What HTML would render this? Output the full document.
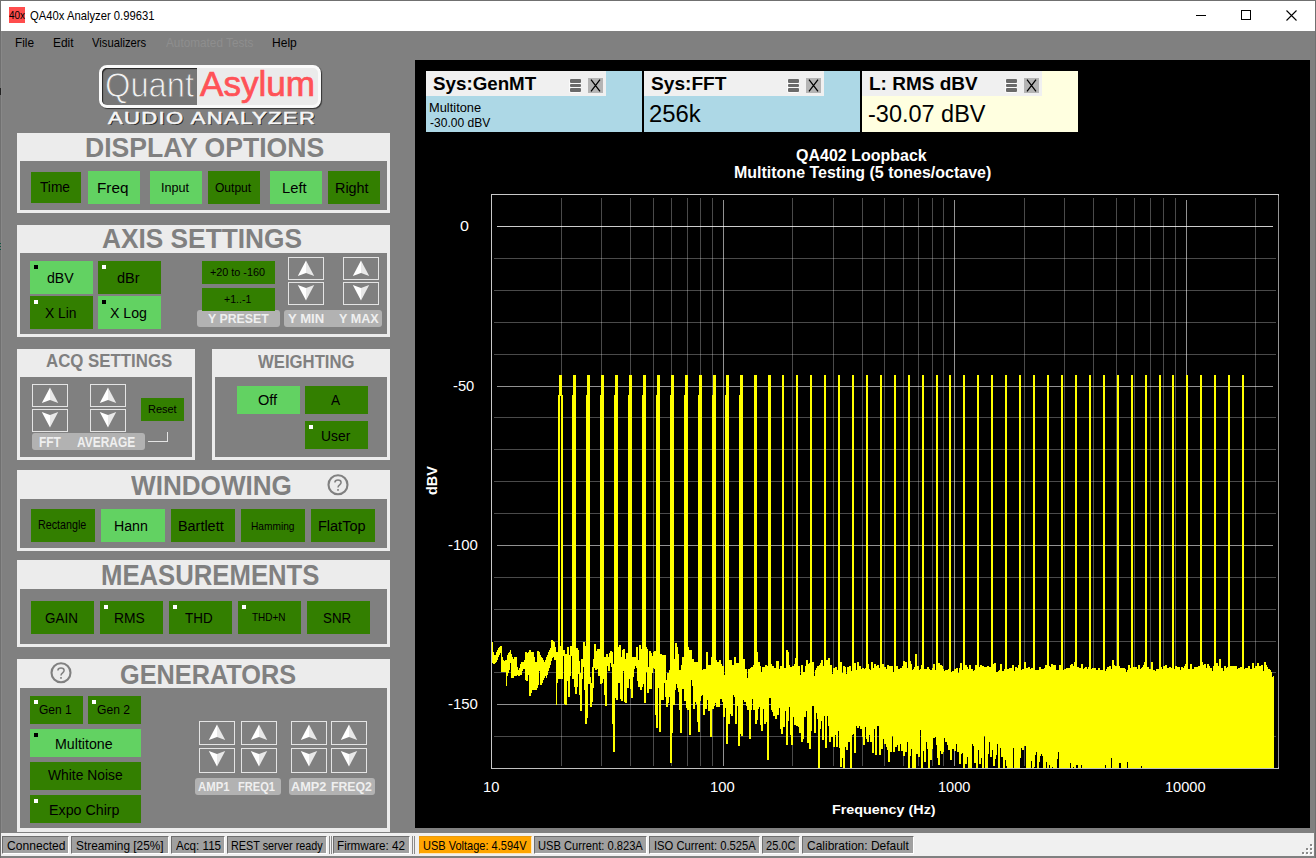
<!DOCTYPE html><html><head><meta charset="utf-8"><style>html,body{margin:0;padding:0;} body{width:1316px;height:858px;overflow:hidden;position:relative;background:#808080;font-family:"Liberation Sans", sans-serif;} body div{position:absolute;box-sizing:border-box;} svg{position:absolute;}</style></head><body><div style="left:0px;top:0px;width:1316px;height:858px;background:#707070;"></div><div style="left:1px;top:1px;width:1314px;height:857px;background:#808080;"></div><div style="left:1px;top:31px;width:1px;height:801px;background:#888888;"></div><div style="left:0px;top:88px;width:1px;height:7px;background:#222222;"></div><div style="left:0px;top:243px;width:1px;height:1px;background:#0f5540;"></div><div style="left:0px;top:246px;width:1px;height:1px;background:#0f5540;"></div><div style="left:0px;top:249px;width:1px;height:1px;background:#0f5540;"></div><div style="left:1px;top:1px;width:1314px;height:30px;background:#fff;"></div><div style="left:9px;top:7px;width:16px;height:16px;background:#ff4d4d;"></div><div style="left:9.00px;top:10.59px;font-size:10.29px;line-height:10.29px;color:#000;font-weight:normal;white-space:nowrap;transform:scaleX(0.9657);transform-origin:0 0;">40x</div><div style="left:29.89px;top:9.80px;font-size:12.75px;line-height:12.75px;color:#000;font-weight:normal;white-space:nowrap;transform:scaleX(0.8820);transform-origin:0 0;">QA40x Analyzer 0.99631</div><div style="left:1196px;top:15px;width:10px;height:1px;background:#000;"></div><div style="left:1241px;top:10px;width:10px;height:10px;border:1px solid #000;"></div><svg style="left:1286px;top:10px" width="11" height="11" viewBox="0 0 11 11"><path d="M0.5 0.5 L10.5 10.5 M10.5 0.5 L0.5 10.5" stroke="#000" stroke-width="1.1"/></svg><div style="left:15.45px;top:37.27px;font-size:12.32px;line-height:12.32px;color:#000;font-weight:normal;white-space:nowrap;transform:scaleX(0.9621);transform-origin:0 0;">File</div><div style="left:52.55px;top:37.27px;font-size:12.32px;line-height:12.32px;color:#000;font-weight:normal;white-space:nowrap;transform:scaleX(0.9682);transform-origin:0 0;">Edit</div><div style="left:92.14px;top:37.27px;font-size:12.32px;line-height:12.32px;color:#000;font-weight:normal;white-space:nowrap;transform:scaleX(0.9129);transform-origin:0 0;">Visualizers</div><div style="left:165.60px;top:37.27px;font-size:12.32px;line-height:12.32px;color:#8e8e8e;font-weight:normal;white-space:nowrap;transform:scaleX(0.9561);transform-origin:0 0;">Automated Tests</div><div style="left:271.64px;top:37.27px;font-size:12.32px;line-height:12.32px;color:#000;font-weight:normal;white-space:nowrap;transform:scaleX(0.9775);transform-origin:0 0;">Help</div><div style="left:99px;top:65px;width:222px;height:43px;border-radius:8px;background:#ebebeb;border:3px solid #fafafa;box-shadow:1px 1px 1px 0 #333;"></div><div style="left:102px;top:68px;width:95px;height:37px;border-radius:5px 0 0 5px;background:#777777;box-shadow:inset 1px 1px 1px #222;"></div><div style="left:105.23px;top:67.09px;font-size:35.22px;line-height:35.22px;color:#f2f2f2;font-weight:normal;white-space:nowrap;transform:scaleX(0.9284);transform-origin:0 0;-webkit-text-stroke:0.9px #777777;">Quant</div><div style="left:200.10px;top:67.12px;font-size:35.65px;line-height:35.65px;color:#ff5257;font-weight:normal;white-space:nowrap;transform:scaleX(0.9850);transform-origin:0 0;-webkit-text-stroke:0.7px #ff5257;">Asylum</div><div style="left:107.50px;top:109.74px;font-size:16.38px;line-height:16.38px;color:#f6f6f6;font-weight:normal;white-space:nowrap;transform:scaleX(1.3462);transform-origin:0 0;letter-spacing:1.0px;-webkit-text-stroke:0.55px #f6f6f6;text-shadow:1px 1px 0 #2a2a2a;">AUDIO ANALYZER</div><div style="left:17px;top:133px;width:373px;height:80px;background:#ececec;"></div><div style="left:20px;top:161px;width:367px;height:49px;background:#808080;"></div><div style="left:85.27px;top:133.50px;font-size:28.12px;line-height:28.12px;color:#808080;font-weight:bold;white-space:nowrap;transform:scaleX(0.9451);transform-origin:0 0;">DISPLAY OPTIONS</div><div style="left:31px;top:172px;width:50px;height:31px;background:#337f00;"></div><div style="left:40.33px;top:180.29px;font-size:14.78px;line-height:14.78px;color:#000;font-weight:normal;white-space:nowrap;transform:scaleX(0.9286);transform-origin:0 0;">Time</div><div style="left:88px;top:171px;width:52px;height:33px;background:#62d262;"></div><div style="left:97.18px;top:180.78px;font-size:14.20px;line-height:14.20px;color:#000;font-weight:normal;white-space:nowrap;transform:scaleX(1.0764);transform-origin:0 0;">Freq</div><div style="left:150px;top:171px;width:52px;height:33px;background:#62d262;"></div><div style="left:161.16px;top:181.88px;font-size:12.90px;line-height:12.90px;color:#000;font-weight:normal;white-space:nowrap;transform:scaleX(0.9778);transform-origin:0 0;">Input</div><div style="left:208px;top:171px;width:52px;height:33px;background:#337f00;"></div><div style="left:215.16px;top:181.88px;font-size:12.90px;line-height:12.90px;color:#000;font-weight:normal;white-space:nowrap;transform:scaleX(0.9330);transform-origin:0 0;">Output</div><div style="left:270px;top:171px;width:52px;height:33px;background:#62d262;"></div><div style="left:282.42px;top:180.78px;font-size:14.20px;line-height:14.20px;color:#000;font-weight:normal;white-space:nowrap;transform:scaleX(1.0383);transform-origin:0 0;">Left</div><div style="left:328px;top:171px;width:52px;height:33px;background:#337f00;"></div><div style="left:335.45px;top:180.78px;font-size:14.20px;line-height:14.20px;color:#000;font-weight:normal;white-space:nowrap;transform:scaleX(1.0130);transform-origin:0 0;">Right</div><div style="left:17px;top:225px;width:373px;height:112px;background:#ececec;"></div><div style="left:20px;top:253px;width:367px;height:81px;background:#808080;"></div><div style="left:101.74px;top:224.05px;font-size:28.41px;line-height:28.41px;color:#808080;font-weight:bold;white-space:nowrap;transform:scaleX(0.9246);transform-origin:0 0;">AXIS SETTINGS</div><div style="left:30px;top:261px;width:63px;height:33px;background:#62d262;"></div><div style="left:34px;top:265px;width:4px;height:4px;background:#000;"></div><div style="left:46.53px;top:270.78px;font-size:14.20px;line-height:14.20px;color:#000;font-weight:normal;white-space:nowrap;transform:scaleX(0.9960);transform-origin:0 0;">dBV</div><div style="left:98px;top:261px;width:63px;height:33px;background:#337f00;"></div><div style="left:102px;top:265px;width:4px;height:4px;background:#fff;"></div><div style="left:116.82px;top:270.78px;font-size:14.20px;line-height:14.20px;color:#000;font-weight:normal;white-space:nowrap;transform:scaleX(1.0233);transform-origin:0 0;">dBr</div><div style="left:30px;top:296px;width:63px;height:33px;background:#337f00;"></div><div style="left:34px;top:300px;width:4px;height:4px;background:#fff;"></div><div style="left:44.65px;top:305.80px;font-size:14.06px;line-height:14.06px;color:#000;font-weight:normal;white-space:nowrap;transform:scaleX(0.9842);transform-origin:0 0;">X Lin</div><div style="left:98px;top:296px;width:63px;height:33px;background:#62d262;"></div><div style="left:102px;top:300px;width:4px;height:4px;background:#000;"></div><div style="left:109.55px;top:305.80px;font-size:14.06px;line-height:14.06px;color:#000;font-weight:normal;white-space:nowrap;transform:scaleX(1.0077);transform-origin:0 0;">X Log</div><div style="left:197px;top:310px;width:83px;height:17px;background:#b2b2b2;border-radius:3px;"></div><div style="left:284px;top:310px;width:98px;height:17px;background:#b2b2b2;border-radius:3px;"></div><div style="left:202px;top:261px;width:73px;height:23px;background:#337f00;"></div><div style="left:209.76px;top:267.21px;font-size:11.45px;line-height:11.45px;color:#000;font-weight:normal;white-space:nowrap;transform:scaleX(0.9450);transform-origin:0 0;">+20 to -160</div><div style="left:202px;top:288px;width:73px;height:23px;background:#337f00;"></div><div style="left:223.77px;top:294.33px;font-size:11.30px;line-height:11.30px;color:#000;font-weight:normal;white-space:nowrap;transform:scaleX(0.9344);transform-origin:0 0;">+1..-1</div><div style="left:207.65px;top:311.57px;font-size:13.62px;line-height:13.62px;color:#efefef;font-weight:bold;white-space:nowrap;transform:scaleX(0.9057);transform-origin:0 0;">Y PRESET</div><div style="left:288.14px;top:311.61px;font-size:13.33px;line-height:13.33px;color:#efefef;font-weight:bold;white-space:nowrap;transform:scaleX(0.9841);transform-origin:0 0;">Y MIN</div><div style="left:338.75px;top:311.61px;font-size:13.33px;line-height:13.33px;color:#efefef;font-weight:bold;white-space:nowrap;transform:scaleX(0.9438);transform-origin:0 0;">Y MAX</div><div style="left:288px;top:257px;width:36px;height:23px;border:1px solid #e4e4e4;"></div><svg style="left:288px;top:257px" width="36" height="23" viewBox="0 0 36 23"><path d="M18 3.5 L9.8 19 L18 16 Z" fill="#fff"/><path d="M18 3.5 L26.2 19 L18 16 Z" fill="#e8e8e8"/></svg><div style="left:288px;top:282px;width:36px;height:23px;border:1px solid #e4e4e4;"></div><svg style="left:288px;top:282px" width="36" height="23" viewBox="0 0 36 23"><path d="M18 18.5 L9.8 3 L18 6 Z" fill="#fff"/><path d="M18 18.5 L26.2 3 L18 6 Z" fill="#e8e8e8"/></svg><div style="left:343px;top:257px;width:36px;height:23px;border:1px solid #e4e4e4;"></div><svg style="left:343px;top:257px" width="36" height="23" viewBox="0 0 36 23"><path d="M18 3.5 L9.8 19 L18 16 Z" fill="#fff"/><path d="M18 3.5 L26.2 19 L18 16 Z" fill="#e8e8e8"/></svg><div style="left:343px;top:282px;width:36px;height:23px;border:1px solid #e4e4e4;"></div><svg style="left:343px;top:282px" width="36" height="23" viewBox="0 0 36 23"><path d="M18 18.5 L9.8 3 L18 6 Z" fill="#fff"/><path d="M18 18.5 L26.2 3 L18 6 Z" fill="#e8e8e8"/></svg><div style="left:17px;top:349px;width:178px;height:111px;background:#ececec;"></div><div style="left:20px;top:377px;width:172px;height:80px;background:#808080;"></div><div style="left:45.98px;top:353.09px;font-size:17.97px;line-height:17.97px;color:#808080;font-weight:bold;white-space:nowrap;transform:scaleX(0.9371);transform-origin:0 0;">ACQ SETTINGS</div><div style="left:32px;top:384px;width:36px;height:23px;border:1px solid #e4e4e4;"></div><svg style="left:32px;top:384px" width="36" height="23" viewBox="0 0 36 23"><path d="M18 3.5 L9.8 19 L18 16 Z" fill="#fff"/><path d="M18 3.5 L26.2 19 L18 16 Z" fill="#e8e8e8"/></svg><div style="left:32px;top:409px;width:36px;height:23px;border:1px solid #e4e4e4;"></div><svg style="left:32px;top:409px" width="36" height="23" viewBox="0 0 36 23"><path d="M18 18.5 L9.8 3 L18 6 Z" fill="#fff"/><path d="M18 18.5 L26.2 3 L18 6 Z" fill="#e8e8e8"/></svg><div style="left:90px;top:384px;width:36px;height:23px;border:1px solid #e4e4e4;"></div><svg style="left:90px;top:384px" width="36" height="23" viewBox="0 0 36 23"><path d="M18 3.5 L9.8 19 L18 16 Z" fill="#fff"/><path d="M18 3.5 L26.2 19 L18 16 Z" fill="#e8e8e8"/></svg><div style="left:90px;top:409px;width:36px;height:23px;border:1px solid #e4e4e4;"></div><svg style="left:90px;top:409px" width="36" height="23" viewBox="0 0 36 23"><path d="M18 18.5 L9.8 3 L18 6 Z" fill="#fff"/><path d="M18 18.5 L26.2 3 L18 6 Z" fill="#e8e8e8"/></svg><div style="left:141px;top:398px;width:43px;height:23px;background:#337f00;"></div><div style="left:147.52px;top:404.45px;font-size:11.16px;line-height:11.16px;color:#000;font-weight:normal;white-space:nowrap;transform:scaleX(0.9831);transform-origin:0 0;">Reset</div><div style="left:32px;top:433px;width:113px;height:17px;background:#b2b2b2;border-radius:3px;"></div><div style="left:38.82px;top:435.00px;font-size:14.06px;line-height:14.06px;color:#efefef;font-weight:bold;white-space:nowrap;transform:scaleX(0.8512);transform-origin:0 0;">FFT</div><div style="left:77.30px;top:435.00px;font-size:14.06px;line-height:14.06px;color:#efefef;font-weight:bold;white-space:nowrap;transform:scaleX(0.8518);transform-origin:0 0;">AVERAGE</div><div style="left:148px;top:441px;width:20px;height:1px;background:#e4e4e4;"></div><div style="left:167px;top:432px;width:1px;height:10px;background:#e4e4e4;"></div><div style="left:212px;top:349px;width:178px;height:111px;background:#ececec;"></div><div style="left:215px;top:377px;width:172px;height:80px;background:#808080;"></div><div style="left:258.20px;top:352.97px;font-size:18.70px;line-height:18.70px;color:#808080;font-weight:bold;white-space:nowrap;transform:scaleX(0.8947);transform-origin:0 0;">WEIGHTING</div><div style="left:237px;top:386px;width:63px;height:28px;background:#62d262;"></div><div style="left:257.94px;top:393.41px;font-size:14.64px;line-height:14.64px;color:#000;font-weight:normal;white-space:nowrap;transform:scaleX(0.9966);transform-origin:0 0;">Off</div><div style="left:305px;top:386px;width:63px;height:28px;background:#337f00;"></div><div style="left:330.90px;top:393.41px;font-size:14.64px;line-height:14.64px;color:#000;font-weight:normal;white-space:nowrap;transform:scaleX(0.9349);transform-origin:0 0;">A</div><div style="left:305px;top:421px;width:63px;height:28px;background:#337f00;"></div><div style="left:309px;top:425px;width:4px;height:4px;background:#fff;"></div><div style="left:320.86px;top:428.51px;font-size:14.64px;line-height:14.64px;color:#000;font-weight:normal;white-space:nowrap;transform:scaleX(0.9470);transform-origin:0 0;">User</div><div style="left:17px;top:470px;width:373px;height:81px;background:#ececec;"></div><div style="left:20px;top:499px;width:367px;height:49px;background:#808080;"></div><div style="left:130.60px;top:471.28px;font-size:28.26px;line-height:28.26px;color:#808080;font-weight:bold;white-space:nowrap;transform:scaleX(0.9239);transform-origin:0 0;">WINDOWING</div><svg style="left:325.5px;top:472.5px" width="24" height="24" viewBox="0 0 24 24"><circle cx="12" cy="11.7" r="9.5" fill="none" stroke="#808080" stroke-width="2.1"/><path d="M8.9 9.6 C8.9 6.2 15.1 6.2 15.1 9.6 C15.1 11.8 12 11.9 12 14.4" fill="none" stroke="#808080" stroke-width="1.5"/><rect x="11.2" y="16" width="1.6" height="1.8" fill="#808080"/></svg><div style="left:31px;top:509px;width:64px;height:33px;background:#337f00;"></div><div style="left:37.84px;top:520.14px;font-size:11.88px;line-height:11.88px;color:#000;font-weight:normal;white-space:nowrap;transform:scaleX(0.9040);transform-origin:0 0;">Rectangle</div><div style="left:101px;top:509px;width:64px;height:33px;background:#62d262;"></div><div style="left:114.37px;top:518.63px;font-size:14.49px;line-height:14.49px;color:#000;font-weight:normal;white-space:nowrap;transform:scaleX(0.9774);transform-origin:0 0;">Hann</div><div style="left:171px;top:509px;width:64px;height:33px;background:#337f00;"></div><div style="left:178.35px;top:518.63px;font-size:14.49px;line-height:14.49px;color:#000;font-weight:normal;white-space:nowrap;transform:scaleX(0.9947);transform-origin:0 0;">Bartlett</div><div style="left:241px;top:509px;width:64px;height:33px;background:#337f00;"></div><div style="left:250.89px;top:520.60px;font-size:10.87px;line-height:10.87px;color:#000;font-weight:normal;white-space:nowrap;transform:scaleX(0.9345);transform-origin:0 0;">Hamming</div><div style="left:311px;top:509px;width:64px;height:33px;background:#337f00;"></div><div style="left:317.54px;top:518.63px;font-size:14.49px;line-height:14.49px;color:#000;font-weight:normal;white-space:nowrap;transform:scaleX(1.0001);transform-origin:0 0;">FlatTop</div><div style="left:17px;top:560px;width:373px;height:87px;background:#ececec;"></div><div style="left:20px;top:589px;width:367px;height:55px;background:#808080;"></div><div style="left:101.43px;top:559.72px;font-size:29.28px;line-height:29.28px;color:#808080;font-weight:bold;white-space:nowrap;transform:scaleX(0.8780);transform-origin:0 0;">MEASUREMENTS</div><div style="left:31px;top:601px;width:63px;height:33px;background:#337f00;"></div><div style="left:44.83px;top:610.63px;font-size:14.49px;line-height:14.49px;color:#000;font-weight:normal;white-space:nowrap;transform:scaleX(0.9270);transform-origin:0 0;">GAIN</div><div style="left:100px;top:601px;width:63px;height:33px;background:#337f00;"></div><div style="left:104px;top:605px;width:4px;height:4px;background:#fff;"></div><div style="left:114.39px;top:610.63px;font-size:14.49px;line-height:14.49px;color:#000;font-weight:normal;white-space:nowrap;transform:scaleX(0.9551);transform-origin:0 0;">RMS</div><div style="left:169px;top:601px;width:63px;height:33px;background:#337f00;"></div><div style="left:173px;top:605px;width:4px;height:4px;background:#fff;"></div><div style="left:185.33px;top:610.63px;font-size:14.49px;line-height:14.49px;color:#000;font-weight:normal;white-space:nowrap;transform:scaleX(0.9258);transform-origin:0 0;">THD</div><div style="left:238px;top:601px;width:63px;height:33px;background:#337f00;"></div><div style="left:242px;top:605px;width:4px;height:4px;background:#fff;"></div><div style="left:251.80px;top:612.23px;font-size:11.30px;line-height:11.30px;color:#000;font-weight:normal;white-space:nowrap;transform:scaleX(0.8819);transform-origin:0 0;">THD+N</div><div style="left:307px;top:601px;width:63px;height:33px;background:#337f00;"></div><div style="left:323.20px;top:610.63px;font-size:14.49px;line-height:14.49px;color:#000;font-weight:normal;white-space:nowrap;transform:scaleX(0.9189);transform-origin:0 0;">SNR</div><div style="left:17px;top:659px;width:373px;height:173px;background:#ececec;"></div><div style="left:20px;top:688px;width:367px;height:140px;background:#808080;"></div><svg style="left:49.3px;top:661px" width="24" height="24" viewBox="0 0 24 24"><circle cx="12" cy="11.7" r="9.5" fill="none" stroke="#808080" stroke-width="2.1"/><path d="M8.9 9.6 C8.9 6.2 15.1 6.2 15.1 9.6 C15.1 11.8 12 11.9 12 14.4" fill="none" stroke="#808080" stroke-width="1.5"/><rect x="11.2" y="16" width="1.6" height="1.8" fill="#808080"/></svg><div style="left:119.99px;top:660.60px;font-size:28.12px;line-height:28.12px;color:#808080;font-weight:bold;white-space:nowrap;transform:scaleX(0.8999);transform-origin:0 0;">GENERATORS</div><div style="left:30px;top:696px;width:53px;height:28px;background:#337f00;"></div><div style="left:34px;top:700px;width:4px;height:4px;background:#fff;"></div><div style="left:39.15px;top:704.25px;font-size:12.46px;line-height:12.46px;color:#000;font-weight:normal;white-space:nowrap;transform:scaleX(0.9625);transform-origin:0 0;">Gen 1</div><div style="left:88px;top:696px;width:53px;height:28px;background:#337f00;"></div><div style="left:92px;top:700px;width:4px;height:4px;background:#fff;"></div><div style="left:96.99px;top:704.25px;font-size:12.46px;line-height:12.46px;color:#000;font-weight:normal;white-space:nowrap;transform:scaleX(0.9720);transform-origin:0 0;">Gen 2</div><div style="left:30px;top:729px;width:111px;height:28px;background:#62d262;"></div><div style="left:34px;top:733px;width:4px;height:4px;background:#000;"></div><div style="left:55.36px;top:736.80px;font-size:14.06px;line-height:14.06px;color:#000;font-weight:normal;white-space:nowrap;transform:scaleX(1.0118);transform-origin:0 0;">Multitone</div><div style="left:30px;top:762px;width:111px;height:28px;background:#337f00;"></div><div style="left:47.53px;top:767.58px;font-size:14.20px;line-height:14.20px;color:#000;font-weight:normal;white-space:nowrap;transform:scaleX(0.9757);transform-origin:0 0;">White Noise</div><div style="left:30px;top:795px;width:111px;height:28px;background:#337f00;"></div><div style="left:34px;top:799px;width:4px;height:4px;background:#fff;"></div><div style="left:49.06px;top:802.90px;font-size:14.06px;line-height:14.06px;color:#000;font-weight:normal;white-space:nowrap;transform:scaleX(1.0143);transform-origin:0 0;">Expo Chirp</div><div style="left:199px;top:721px;width:36px;height:24px;border:1px solid #e4e4e4;"></div><svg style="left:199px;top:721px" width="36" height="23" viewBox="0 0 36 23"><path d="M18 3.5 L9.8 19 L18 16 Z" fill="#fff"/><path d="M18 3.5 L26.2 19 L18 16 Z" fill="#e8e8e8"/></svg><div style="left:199px;top:748px;width:36px;height:25px;border:1px solid #e4e4e4;"></div><svg style="left:199px;top:748px" width="36" height="23" viewBox="0 0 36 23"><path d="M18 18.5 L9.8 3 L18 6 Z" fill="#fff"/><path d="M18 18.5 L26.2 3 L18 6 Z" fill="#e8e8e8"/></svg><div style="left:241px;top:721px;width:36px;height:24px;border:1px solid #e4e4e4;"></div><svg style="left:241px;top:721px" width="36" height="23" viewBox="0 0 36 23"><path d="M18 3.5 L9.8 19 L18 16 Z" fill="#fff"/><path d="M18 3.5 L26.2 19 L18 16 Z" fill="#e8e8e8"/></svg><div style="left:241px;top:748px;width:36px;height:25px;border:1px solid #e4e4e4;"></div><svg style="left:241px;top:748px" width="36" height="23" viewBox="0 0 36 23"><path d="M18 18.5 L9.8 3 L18 6 Z" fill="#fff"/><path d="M18 18.5 L26.2 3 L18 6 Z" fill="#e8e8e8"/></svg><div style="left:291px;top:721px;width:36px;height:24px;border:1px solid #e4e4e4;"></div><svg style="left:291px;top:721px" width="36" height="23" viewBox="0 0 36 23"><path d="M18 3.5 L9.8 19 L18 16 Z" fill="#fff"/><path d="M18 3.5 L26.2 19 L18 16 Z" fill="#e8e8e8"/></svg><div style="left:291px;top:748px;width:36px;height:25px;border:1px solid #e4e4e4;"></div><svg style="left:291px;top:748px" width="36" height="23" viewBox="0 0 36 23"><path d="M18 18.5 L9.8 3 L18 6 Z" fill="#fff"/><path d="M18 18.5 L26.2 3 L18 6 Z" fill="#e8e8e8"/></svg><div style="left:331px;top:721px;width:36px;height:24px;border:1px solid #e4e4e4;"></div><svg style="left:331px;top:721px" width="36" height="23" viewBox="0 0 36 23"><path d="M18 3.5 L9.8 19 L18 16 Z" fill="#fff"/><path d="M18 3.5 L26.2 19 L18 16 Z" fill="#e8e8e8"/></svg><div style="left:331px;top:748px;width:36px;height:25px;border:1px solid #e4e4e4;"></div><svg style="left:331px;top:748px" width="36" height="23" viewBox="0 0 36 23"><path d="M18 18.5 L9.8 3 L18 6 Z" fill="#fff"/><path d="M18 18.5 L26.2 3 L18 6 Z" fill="#e8e8e8"/></svg><div style="left:195px;top:778px;width:86px;height:17px;background:#b2b2b2;border-radius:3px;"></div><div style="left:289px;top:778px;width:86px;height:17px;background:#b2b2b2;border-radius:3px;"></div><div style="left:198.42px;top:780.07px;font-size:13.62px;line-height:13.62px;color:#efefef;font-weight:bold;white-space:nowrap;transform:scaleX(0.8351);transform-origin:0 0;">AMP1</div><div style="left:237.68px;top:780.07px;font-size:13.62px;line-height:13.62px;color:#efefef;font-weight:bold;white-space:nowrap;transform:scaleX(0.8166);transform-origin:0 0;">FREQ1</div><div style="left:291.48px;top:780.07px;font-size:13.62px;line-height:13.62px;color:#efefef;font-weight:bold;white-space:nowrap;transform:scaleX(0.9372);transform-origin:0 0;">AMP2</div><div style="left:331.40px;top:780.07px;font-size:13.62px;line-height:13.62px;color:#efefef;font-weight:bold;white-space:nowrap;transform:scaleX(0.9022);transform-origin:0 0;">FREQ2</div><div style="left:1px;top:833px;width:1313px;height:23px;background:#f0f0f0;"></div><div style="left:2px;top:836px;width:67px;height:18px;background:#a0a0a0;border-top:1px solid #6e6e6e;border-left:1px solid #6e6e6e;border-bottom:1px solid #fff;border-right:1px solid #fff;"></div><div style="left:6.70px;top:839.88px;font-size:12.90px;line-height:12.90px;color:#000;font-weight:normal;white-space:nowrap;transform:scaleX(0.9379);transform-origin:0 0;">Connected</div><div style="left:71px;top:836px;width:98px;height:18px;background:#a0a0a0;border-top:1px solid #6e6e6e;border-left:1px solid #6e6e6e;border-bottom:1px solid #fff;border-right:1px solid #fff;"></div><div style="left:76.47px;top:839.88px;font-size:12.90px;line-height:12.90px;color:#000;font-weight:normal;white-space:nowrap;transform:scaleX(0.9186);transform-origin:0 0;">Streaming [25%]</div><div style="left:171px;top:836px;width:54px;height:18px;background:#a0a0a0;border-top:1px solid #6e6e6e;border-left:1px solid #6e6e6e;border-bottom:1px solid #fff;border-right:1px solid #fff;"></div><div style="left:176.00px;top:839.88px;font-size:12.90px;line-height:12.90px;color:#000;font-weight:normal;white-space:nowrap;transform:scaleX(0.9028);transform-origin:0 0;">Acq: 115</div><div style="left:227px;top:836px;width:100px;height:18px;background:#a0a0a0;border-top:1px solid #6e6e6e;border-left:1px solid #6e6e6e;border-bottom:1px solid #fff;border-right:1px solid #fff;"></div><div style="left:231.43px;top:839.88px;font-size:12.90px;line-height:12.90px;color:#000;font-weight:normal;white-space:nowrap;transform:scaleX(0.8385);transform-origin:0 0;">REST server ready</div><div style="left:333px;top:836px;width:77px;height:18px;background:#a0a0a0;border-top:1px solid #6e6e6e;border-left:1px solid #6e6e6e;border-bottom:1px solid #fff;border-right:1px solid #fff;"></div><div style="left:337.27px;top:839.88px;font-size:12.90px;line-height:12.90px;color:#000;font-weight:normal;white-space:nowrap;transform:scaleX(0.9051);transform-origin:0 0;">Firmware: 42</div><div style="left:419px;top:836px;width:113px;height:18px;background:#ffa500;border-top:1px solid #e89a10;border-left:1px solid #e89a10;border-bottom:1px solid #ffe6b8;border-right:1px solid #ffe6b8;"></div><div style="left:423.47px;top:839.88px;font-size:12.90px;line-height:12.90px;color:#000;font-weight:normal;white-space:nowrap;transform:scaleX(0.8548);transform-origin:0 0;">USB Voltage: 4.594V</div><div style="left:534px;top:836px;width:113px;height:18px;background:#a0a0a0;border-top:1px solid #6e6e6e;border-left:1px solid #6e6e6e;border-bottom:1px solid #fff;border-right:1px solid #fff;"></div><div style="left:537.66px;top:839.88px;font-size:12.90px;line-height:12.90px;color:#000;font-weight:normal;white-space:nowrap;transform:scaleX(0.8656);transform-origin:0 0;">USB Current: 0.823A</div><div style="left:649px;top:836px;width:111px;height:18px;background:#a0a0a0;border-top:1px solid #6e6e6e;border-left:1px solid #6e6e6e;border-bottom:1px solid #fff;border-right:1px solid #fff;"></div><div style="left:653.59px;top:839.88px;font-size:12.90px;line-height:12.90px;color:#000;font-weight:normal;white-space:nowrap;transform:scaleX(0.8721);transform-origin:0 0;">ISO Current: 0.525A</div><div style="left:762px;top:836px;width:38px;height:18px;background:#a0a0a0;border-top:1px solid #6e6e6e;border-left:1px solid #6e6e6e;border-bottom:1px solid #fff;border-right:1px solid #fff;"></div><div style="left:765.95px;top:839.88px;font-size:12.90px;line-height:12.90px;color:#000;font-weight:normal;white-space:nowrap;transform:scaleX(0.8564);transform-origin:0 0;">25.0C</div><div style="left:802px;top:836px;width:112px;height:18px;background:#a0a0a0;border-top:1px solid #6e6e6e;border-left:1px solid #6e6e6e;border-bottom:1px solid #fff;border-right:1px solid #fff;"></div><div style="left:806.60px;top:839.88px;font-size:12.90px;line-height:12.90px;color:#000;font-weight:normal;white-space:nowrap;transform:scaleX(0.9291);transform-origin:0 0;">Calibration: Default</div><div style="left:1311px;top:845px;width:2px;height:2px;background:#ffffff;"></div><div style="left:1310px;top:844px;width:2px;height:2px;background:#8a8a8a;"></div><div style="left:1307px;top:849px;width:2px;height:2px;background:#ffffff;"></div><div style="left:1306px;top:848px;width:2px;height:2px;background:#8a8a8a;"></div><div style="left:1311px;top:849px;width:2px;height:2px;background:#ffffff;"></div><div style="left:1310px;top:848px;width:2px;height:2px;background:#8a8a8a;"></div><div style="left:1303px;top:853px;width:2px;height:2px;background:#ffffff;"></div><div style="left:1302px;top:852px;width:2px;height:2px;background:#8a8a8a;"></div><div style="left:1307px;top:853px;width:2px;height:2px;background:#ffffff;"></div><div style="left:1306px;top:852px;width:2px;height:2px;background:#8a8a8a;"></div><div style="left:1311px;top:853px;width:2px;height:2px;background:#ffffff;"></div><div style="left:1310px;top:852px;width:2px;height:2px;background:#8a8a8a;"></div><div style="left:329px;top:836px;width:1px;height:18px;background:#8a8a8a;"></div><div style="left:331px;top:836px;width:1px;height:18px;background:#8a8a8a;"></div><div style="left:412px;top:836px;width:1px;height:18px;background:#8a8a8a;"></div><div style="left:414px;top:836px;width:1px;height:18px;background:#8a8a8a;"></div><div style="left:415px;top:60px;width:895px;height:768px;background:#000;"></div><div style="left:426px;top:71px;width:216px;height:61px;background:#add8e6;"></div><div style="left:426px;top:71px;width:180px;height:25px;background:#f0f0f0;"></div><div style="left:433.19px;top:73.81px;font-size:19.13px;line-height:19.13px;color:#000;font-weight:bold;white-space:nowrap;transform:scaleX(0.9818);transform-origin:0 0;">Sys:GenMT</div><div style="left:569px;top:78.5px;width:12px;height:14px;background:#fbfbfb;border-radius:2px;"></div><div style="left:569.5px;top:79.2px;width:11px;height:3.7px;background:#6a6a6a;border-radius:1px;"></div><div style="left:569.5px;top:83.60000000000001px;width:11px;height:3.7px;background:#6a6a6a;border-radius:1px;"></div><div style="left:569.5px;top:88.0px;width:11px;height:3.7px;background:#6a6a6a;border-radius:1px;"></div><div style="left:588px;top:78px;width:15px;height:15px;background:#b4b4b4;"></div><svg style="left:590px;top:79px" width="11" height="13" viewBox="0 0 11 13"><path d="M1 0.6 L10 12.4 M10 0.6 L1 12.4" stroke="#000" stroke-width="1.25"/></svg><div style="left:429.37px;top:102.03px;font-size:12.61px;line-height:12.61px;color:#000;font-weight:normal;white-space:nowrap;transform:scaleX(1.0191);transform-origin:0 0;">Multitone</div><div style="left:429.56px;top:117.15px;font-size:12.46px;line-height:12.46px;color:#000;font-weight:normal;white-space:nowrap;transform:scaleX(0.9677);transform-origin:0 0;">-30.00 dBV</div><div style="left:644px;top:71px;width:216px;height:61px;background:#add8e6;"></div><div style="left:644px;top:71px;width:180px;height:25px;background:#f0f0f0;"></div><div style="left:651.18px;top:73.81px;font-size:19.13px;line-height:19.13px;color:#000;font-weight:bold;white-space:nowrap;transform:scaleX(1.0006);transform-origin:0 0;">Sys:FFT</div><div style="left:787px;top:78.5px;width:12px;height:14px;background:#fbfbfb;border-radius:2px;"></div><div style="left:787.5px;top:79.2px;width:11px;height:3.7px;background:#6a6a6a;border-radius:1px;"></div><div style="left:787.5px;top:83.60000000000001px;width:11px;height:3.7px;background:#6a6a6a;border-radius:1px;"></div><div style="left:787.5px;top:88.0px;width:11px;height:3.7px;background:#6a6a6a;border-radius:1px;"></div><div style="left:806px;top:78px;width:15px;height:15px;background:#b4b4b4;"></div><svg style="left:808px;top:79px" width="11" height="13" viewBox="0 0 11 13"><path d="M1 0.6 L10 12.4 M10 0.6 L1 12.4" stroke="#000" stroke-width="1.25"/></svg><div style="left:649.21px;top:102.31px;font-size:24.20px;line-height:24.20px;color:#000;font-weight:normal;white-space:nowrap;transform:scaleX(0.9862);transform-origin:0 0;">256k</div><div style="left:862px;top:71px;width:216px;height:61px;background:#ffffe0;"></div><div style="left:862px;top:71px;width:180px;height:25px;background:#f0f0f0;"></div><div style="left:868.76px;top:73.81px;font-size:19.13px;line-height:19.13px;color:#000;font-weight:bold;white-space:nowrap;transform:scaleX(0.9936);transform-origin:0 0;">L: RMS dBV</div><div style="left:1005px;top:78.5px;width:12px;height:14px;background:#fbfbfb;border-radius:2px;"></div><div style="left:1005.5px;top:79.2px;width:11px;height:3.7px;background:#6a6a6a;border-radius:1px;"></div><div style="left:1005.5px;top:83.60000000000001px;width:11px;height:3.7px;background:#6a6a6a;border-radius:1px;"></div><div style="left:1005.5px;top:88.0px;width:11px;height:3.7px;background:#6a6a6a;border-radius:1px;"></div><div style="left:1024px;top:78px;width:15px;height:15px;background:#b4b4b4;"></div><svg style="left:1026px;top:79px" width="11" height="13" viewBox="0 0 11 13"><path d="M1 0.6 L10 12.4 M10 0.6 L1 12.4" stroke="#000" stroke-width="1.25"/></svg><div style="left:867.54px;top:102.43px;font-size:24.06px;line-height:24.06px;color:#000;font-weight:normal;white-space:nowrap;transform:scaleX(0.9766);transform-origin:0 0;">-30.07 dBV</div><div style="left:795.96px;top:146.88px;font-size:16.09px;line-height:16.09px;color:#fff;font-weight:bold;white-space:nowrap;transform:scaleX(0.9955);transform-origin:0 0;">QA402 Loopback</div><div style="left:733.86px;top:164.85px;font-size:16.96px;line-height:16.96px;color:#fff;font-weight:bold;white-space:nowrap;transform:scaleX(0.9437);transform-origin:0 0;">Multitone Testing (5 tones/octave)</div><div style="left:831.87px;top:803.09px;font-size:13.48px;line-height:13.48px;color:#fff;font-weight:bold;white-space:nowrap;transform:scaleX(1.0654);transform-origin:0 0;">Frequency (Hz)</div><div style="left:459.86px;top:218.65px;font-size:14.35px;line-height:14.35px;color:#fff;font-weight:normal;white-space:nowrap;transform:scaleX(1.1181);transform-origin:0 0;">0</div><div style="left:452.64px;top:378.63px;font-size:14.49px;line-height:14.49px;color:#fff;font-weight:normal;white-space:nowrap;transform:scaleX(1.0160);transform-origin:0 0;">-50</div><div style="left:448.43px;top:537.53px;font-size:14.49px;line-height:14.49px;color:#fff;font-weight:normal;white-space:nowrap;transform:scaleX(1.0314);transform-origin:0 0;">-100</div><div style="left:448.43px;top:696.63px;font-size:14.49px;line-height:14.49px;color:#fff;font-weight:normal;white-space:nowrap;transform:scaleX(1.0314);transform-origin:0 0;">-150</div><div style="left:482.90px;top:779.63px;font-size:14.49px;line-height:14.49px;color:#fff;font-weight:normal;white-space:nowrap;transform:scaleX(1.0143);transform-origin:0 0;">10</div><div style="left:710.09px;top:779.51px;font-size:14.64px;line-height:14.64px;color:#fff;font-weight:normal;white-space:nowrap;transform:scaleX(1.0105);transform-origin:0 0;">100</div><div style="left:937.81px;top:779.51px;font-size:14.64px;line-height:14.64px;color:#fff;font-weight:normal;white-space:nowrap;transform:scaleX(0.9949);transform-origin:0 0;">1000</div><div style="left:1165.10px;top:779.51px;font-size:14.64px;line-height:14.64px;color:#fff;font-weight:normal;white-space:nowrap;transform:scaleX(0.9979);transform-origin:0 0;">10000</div><div style="left:418px;top:473.5px;width:28px;height:14px;font-size:14.5px;line-height:14px;color:#fff;font-weight:bold;transform:rotate(-90deg);transform-origin:50% 50%;text-align:center;">dBV</div><svg style="left:0;top:0" width="1316" height="858" viewBox="0 0 1316 858" shape-rendering="crispEdges"><line x1="561.5" y1="198" x2="561.5" y2="766" stroke="rgba(255,255,255,0.29)"/><line x1="601.5" y1="198" x2="601.5" y2="766" stroke="rgba(255,255,255,0.29)"/><line x1="630.5" y1="198" x2="630.5" y2="766" stroke="rgba(255,255,255,0.29)"/><line x1="653.5" y1="198" x2="653.5" y2="766" stroke="rgba(255,255,255,0.29)"/><line x1="671.5" y1="198" x2="671.5" y2="766" stroke="rgba(255,255,255,0.29)"/><line x1="687.5" y1="198" x2="687.5" y2="766" stroke="rgba(255,255,255,0.29)"/><line x1="700.5" y1="198" x2="700.5" y2="766" stroke="rgba(255,255,255,0.29)"/><line x1="712.5" y1="198" x2="712.5" y2="766" stroke="rgba(255,255,255,0.29)"/><line x1="723.5" y1="200" x2="723.5" y2="766" stroke="rgba(255,255,255,0.57)"/><line x1="792.5" y1="198" x2="792.5" y2="766" stroke="rgba(255,255,255,0.29)"/><line x1="833.5" y1="198" x2="833.5" y2="766" stroke="rgba(255,255,255,0.29)"/><line x1="862.5" y1="198" x2="862.5" y2="766" stroke="rgba(255,255,255,0.29)"/><line x1="884.5" y1="198" x2="884.5" y2="766" stroke="rgba(255,255,255,0.29)"/><line x1="903.5" y1="198" x2="903.5" y2="766" stroke="rgba(255,255,255,0.29)"/><line x1="918.5" y1="198" x2="918.5" y2="766" stroke="rgba(255,255,255,0.29)"/><line x1="932.5" y1="198" x2="932.5" y2="766" stroke="rgba(255,255,255,0.29)"/><line x1="943.5" y1="198" x2="943.5" y2="766" stroke="rgba(255,255,255,0.29)"/><line x1="954.5" y1="200" x2="954.5" y2="766" stroke="rgba(255,255,255,0.57)"/><line x1="1024.5" y1="198" x2="1024.5" y2="766" stroke="rgba(255,255,255,0.29)"/><line x1="1064.5" y1="198" x2="1064.5" y2="766" stroke="rgba(255,255,255,0.29)"/><line x1="1093.5" y1="198" x2="1093.5" y2="766" stroke="rgba(255,255,255,0.29)"/><line x1="1116.5" y1="198" x2="1116.5" y2="766" stroke="rgba(255,255,255,0.29)"/><line x1="1134.5" y1="198" x2="1134.5" y2="766" stroke="rgba(255,255,255,0.29)"/><line x1="1150.5" y1="198" x2="1150.5" y2="766" stroke="rgba(255,255,255,0.29)"/><line x1="1163.5" y1="198" x2="1163.5" y2="766" stroke="rgba(255,255,255,0.29)"/><line x1="1175.5" y1="198" x2="1175.5" y2="766" stroke="rgba(255,255,255,0.29)"/><line x1="1186.5" y1="200" x2="1186.5" y2="766" stroke="rgba(255,255,255,0.57)"/><line x1="1255.5" y1="198" x2="1255.5" y2="766" stroke="rgba(255,255,255,0.29)"/><line x1="497" y1="226.5" x2="1273" y2="226.5" stroke="rgba(255,255,255,0.8)"/><line x1="494" y1="258.5" x2="1276" y2="258.5" stroke="rgba(255,255,255,0.29)"/><line x1="494" y1="290.5" x2="1276" y2="290.5" stroke="rgba(255,255,255,0.29)"/><line x1="494" y1="322.5" x2="1276" y2="322.5" stroke="rgba(255,255,255,0.29)"/><line x1="494" y1="354.5" x2="1276" y2="354.5" stroke="rgba(255,255,255,0.29)"/><line x1="497" y1="386.5" x2="1273" y2="386.5" stroke="rgba(255,255,255,0.57)"/><line x1="494" y1="417.5" x2="1276" y2="417.5" stroke="rgba(255,255,255,0.29)"/><line x1="494" y1="449.5" x2="1276" y2="449.5" stroke="rgba(255,255,255,0.29)"/><line x1="494" y1="481.5" x2="1276" y2="481.5" stroke="rgba(255,255,255,0.29)"/><line x1="494" y1="513.5" x2="1276" y2="513.5" stroke="rgba(255,255,255,0.29)"/><line x1="497" y1="545.5" x2="1273" y2="545.5" stroke="rgba(255,255,255,0.57)"/><line x1="494" y1="577.5" x2="1276" y2="577.5" stroke="rgba(255,255,255,0.29)"/><line x1="494" y1="609.5" x2="1276" y2="609.5" stroke="rgba(255,255,255,0.29)"/><line x1="494" y1="641.5" x2="1276" y2="641.5" stroke="rgba(255,255,255,0.29)"/><line x1="494" y1="672.5" x2="1276" y2="672.5" stroke="rgba(255,255,255,0.29)"/><line x1="497" y1="704.5" x2="1273" y2="704.5" stroke="rgba(255,255,255,0.57)"/><line x1="494" y1="736.5" x2="1276" y2="736.5" stroke="rgba(255,255,255,0.29)"/><path d="M491.5 768.5V194.5H1278.5" fill="none" stroke="#c8c8c8"/><path d="M1278.5 194.5V768.5H491.5" fill="none" stroke="#c0c0c0"/><path d="M1278.5 196V767" fill="none" stroke="#959595"/><path d="M492.5 642V663M493.5 652V664M494.5 655V664M495.5 655V663M496.5 652V662M497.5 650V660M498.5 648V657M499.5 647V655M500.5 646V653M501.5 646V672M502.5 657V672M503.5 660V672M504.5 661V672M505.5 660V672M506.5 660V686M507.5 655V676M508.5 653V673M509.5 652V670M510.5 650V663M511.5 654V678M512.5 657V678M513.5 659V678M514.5 657V676M515.5 657V676M516.5 657V676M517.5 667V675M518.5 670V676M519.5 668V676M520.5 664V675M521.5 662V675M522.5 662V671M523.5 662V669M524.5 660V669M525.5 652V680M526.5 652V681M527.5 653V681M528.5 652V675M529.5 650V696M530.5 650V696M531.5 652V693M532.5 652V690M533.5 652V690M534.5 657V690M535.5 662V690M536.5 662V690M537.5 651V688M538.5 651V685M539.5 652V671M540.5 655V685M541.5 657V685M542.5 658V683M543.5 660V680M544.5 662V678M545.5 660V676M546.5 657V678M547.5 655V675M548.5 652V671M549.5 650V668M550.5 648V665M551.5 640V661M552.5 640V658M553.5 641V657M554.5 642V660M555.5 647V660M556.5 652V705M557.5 652V683M558.5 643.0V664.9M559.5 647.8V674.2M560.5 650.8V674.2M561.5 650.8V664.1M562.5 651.4V656.2M563.5 650.1V656.2M564.5 650.1V703.9M565.5 654.0V705.1M566.5 653.6V705.1M567.5 647.1V681.1M568.5 647.1V696.6M569.5 655.2V696.6M570.5 646.2V675.5M571.5 646.0V656.2M572.5 646.0V661.7M573.5 651.6V661.7M574.5 650.4V686.6M575.5 650.4V694.1M576.5 648.0V694.1M577.5 648.0V687.4M578.5 650.0V674.1M579.5 661.4V694.7M580.5 673.1V710.7M581.5 659.3V710.7M582.5 658.8V678.9M583.5 642.3V667.3M584.5 642.3V690.1M585.5 645.5V724.1M586.5 674.1V724.1M587.5 667.7V717.5M588.5 666.9V684.0M589.5 666.9V684.2M590.5 676.5V707.1M591.5 683.2V707.1M592.5 667.3V701.6M593.5 659.2V687.5M594.5 643.6V668.3M595.5 643.6V670.1M596.5 650.6V670.1M597.5 648.5V668.9M598.5 648.5V676.4M599.5 649.0V676.4M600.5 649.0V684.3M601.5 644.9V684.3M602.5 641.7V683.4M603.5 641.7V671.0M604.5 656.6V694.5M605.5 656.6V705.9M606.5 654.4V705.9M607.5 654.4V665.9M608.5 657.0V671.2M609.5 652.5V671.2M610.5 650.5V662.9M611.5 650.5V667.1M612.5 651.5V724.3M613.5 664.0V751.8M614.5 664.8V751.8M615.5 664.2V697.8M616.5 651.8V700.1M617.5 651.8V700.1M618.5 647.0V683.4M619.5 645.4V682.5M620.5 645.4V698.6M621.5 656.9V701.1M622.5 650.2V701.1M623.5 649.4V670.9M624.5 649.4V701.6M625.5 659.1V702.7M626.5 653.0V702.7M627.5 653.0V687.9M628.5 643.3V687.9M629.5 643.3V678.9M630.5 647.2V688.8M631.5 669.9V697.9M632.5 656.6V697.9M633.5 656.6V677.3M634.5 657.3V668.7M635.5 656.6V666.3M636.5 646.6V668.2M637.5 646.6V681.3M638.5 659.7V687.4M639.5 644.9V687.4M640.5 644.9V689.6M641.5 649.1V689.6M642.5 649.1V686.6M643.5 649.9V683.6M644.5 662.1V703.3M645.5 646.5V703.3M646.5 646.5V671.7M647.5 649.0V693.4M648.5 666.6V693.4M649.5 651.2V689.1M650.5 651.2V689.4M651.5 652.7V689.4M652.5 655.6V673.1M653.5 651.9V667.9M654.5 651.4V669.2M655.5 651.4V715.4M656.5 662.3V728.0M657.5 665.6V728.0M658.5 666.4V687.5M659.5 657.7V732.4M660.5 654.4V732.4M661.5 654.4V700.1M662.5 654.5V700.3M663.5 654.5V700.3M664.5 655.2V682.8M665.5 655.2V696.5M666.5 679.8V706.9M667.5 673.4V706.9M668.5 673.4V703.2M669.5 670.3V696.5M670.5 668.1V763.2M671.5 655.8V763.2M672.5 651.2V732.9M673.5 651.2V704.7M674.5 658.5V704.7M675.5 643.0V689.5M676.5 643.0V683.7M677.5 647.3V688.2M678.5 653.6V692.0M679.5 669.6V710.4M680.5 669.6V733.4M681.5 665.1V733.4M682.5 657.0V689.0M683.5 656.9V689.0M684.5 656.9V700.7M685.5 656.8V700.7M686.5 656.8V707.8M687.5 646.8V710.3M688.5 646.8V710.3M689.5 649.6V734.5M690.5 649.5V734.5M691.5 649.5V680.3M692.5 658.8V686.4M693.5 658.8V709.3M694.5 661.8V709.3M695.5 661.8V701.5M696.5 662.1V704.1M697.5 662.1V722.1M698.5 665.5V732.0M699.5 655.4V732.0M700.5 655.4V700.5M701.5 658.8V696.0M702.5 670.3V695.4M703.5 668.7V714.7M704.5 668.7V714.7M705.5 668.5V709.3M706.5 652.1V709.3M707.5 652.1V699.9M708.5 664.7V711.2M709.5 665.4V711.2M710.5 665.4V736.5M711.5 657.3V736.5M712.5 657.3V708.5M713.5 662.9V708.5M714.5 666.3V706.4M715.5 660.1V703.2M716.5 660.1V706.7M717.5 661.6V706.7M718.5 661.6V707.3M719.5 660.1V707.3M720.5 660.1V699.3M721.5 664.4V699.3M722.5 665.6V701.6M723.5 665.6V716.6M724.5 675.3V716.6M725.5 670.1V707.5M726.5 670.1V743.5M727.5 673.8V743.5M728.5 660.3V724.0M729.5 660.3V724.0M730.5 660.0V713.8M731.5 660.0V716.1M732.5 665.4V716.1M733.5 665.4V694.6M734.5 657.0V696.7M735.5 657.0V724.3M736.5 662.8V724.3M737.5 662.8V706.3M738.5 663.3V746.4M739.5 663.6V746.4M740.5 669.7V734.2M741.5 662.9V735.6M742.5 662.9V735.6M743.5 658.6V700.2M744.5 658.6V702.2M745.5 669.0V702.2M746.5 669.0V705.7M747.5 678.0V710.2M748.5 668.6V710.2M749.5 668.6V738.5M750.5 668.1V738.5M751.5 667.3V710.4M752.5 667.1V698.7M753.5 664.6V710.2M754.5 664.6V710.2M755.5 665.8V724.1M756.5 652.3V724.1M757.5 652.3V719.5M758.5 661.9V709.3M759.5 661.9V706.7M760.5 665.5V724.5M761.5 671.5V730.8M762.5 667.4V730.8M763.5 666.8V709.0M764.5 666.8V723.7M765.5 664.5V723.7M766.5 664.5V722.2M767.5 666.2V760.3M768.5 663.5V760.3M769.5 663.5V697.5M770.5 663.9V697.8M771.5 663.9V710.3M772.5 666.2V711.9M773.5 666.2V716.3M774.5 668.4V716.3M775.5 668.0V719.2M776.5 661.4V719.2M777.5 661.0V714.5M778.5 661.0V714.5M779.5 669.4V708.0M780.5 666.4V728.5M781.5 666.4V734.0M782.5 657.0V734.0M783.5 657.0V726.5M784.5 668.3V726.5M785.5 668.3V711.3M786.5 649.8V744.7M787.5 649.8V744.7M788.5 652.2V721.4M789.5 665.4V707.3M790.5 667.2V735.0M791.5 667.2V745.4M792.5 666.3V745.4M793.5 666.3V717.4M794.5 663.8V725.3M795.5 658.2V725.3M796.5 658.2V726.3M797.5 665.5V726.3M798.5 665.8V726.9M799.5 665.8V733.0M800.5 674.7V733.0M801.5 664.5V741.8M802.5 664.5V741.8M803.5 672.3V738.6M804.5 672.3V716.6M805.5 665.7V716.6M806.5 660.3V711.1M807.5 660.3V742.9M808.5 663.8V742.9M809.5 662.8V749.3M810.5 662.8V749.3M811.5 663.0V731.4M812.5 661.7V706.2M813.5 661.7V706.2M814.5 675.7V732.5M815.5 669.8V732.5M816.5 667.7V713.4M817.5 665.9V718.9M818.5 665.9V768.0M819.5 664.9V768.0M820.5 663.1V729.1M821.5 659.9V720.8M822.5 659.9V740.0M823.5 665.6V740.0M824.5 665.6V716.3M825.5 671.8V747.8M826.5 659.8V747.8M827.5 659.8V716.4M828.5 657.5V726.3M829.5 657.5V742.0M830.5 665.3V742.0M831.5 665.3V736.5M832.5 674.4V736.5M833.5 667.6V747.4M834.5 667.6V747.4M835.5 666.8V734.6M836.5 666.8V747.1M837.5 669.8V747.1M838.5 666.6V731.1M839.5 666.6V748.0M840.5 661.9V766.9M841.5 661.9V766.9M842.5 673.3V757.8M843.5 666.3V768.0M844.5 666.3V768.0M845.5 667.3V747.3M846.5 674.4V750.3M847.5 666.8V750.3M848.5 666.8V742.1M849.5 666.1V742.1M850.5 666.1V768.0M851.5 670.8V768.0M852.5 670.8V734.6M853.5 663.1V734.3M854.5 662.6V753.4M855.5 662.6V753.4M856.5 670.2V726.4M857.5 662.3V727.8M858.5 662.3V727.8M859.5 665.8V725.8M860.5 665.8V729.1M861.5 669.1V729.1M862.5 667.5V736.5M863.5 667.5V745.3M864.5 668.8V745.3M865.5 668.0V727.1M866.5 663.2V739.0M867.5 663.2V741.8M868.5 663.7V741.8M869.5 668.8V734.6M870.5 670.0V742.3M871.5 662.1V742.3M872.5 662.1V753.0M873.5 667.7V753.0M874.5 663.6V728.6M875.5 663.6V754.6M876.5 666.2V754.6M877.5 664.5V725.8M878.5 664.5V725.8M879.5 667.5V755.2M880.5 662.8V755.2M881.5 662.8V748.5M882.5 663.8V748.5M883.5 663.8V739.2M884.5 666.7V743.7M885.5 666.7V743.7M886.5 668.5V746.7M887.5 665.4V750.3M888.5 665.4V762.2M889.5 665.5V762.2M890.5 665.5V752.2M891.5 666.1V752.2M892.5 666.1V735.9M893.5 671.8V751.8M894.5 668.5V751.8M895.5 668.5V746.5M896.5 665.6V746.5M897.5 665.6V745.2M898.5 669.2V751.3M899.5 668.7V751.3M900.5 667.8V743.9M901.5 667.8V750.5M902.5 666.0V750.5M903.5 660.9V756.0M904.5 660.9V756.0M905.5 661.5V752.4M906.5 661.5V752.4M907.5 668.4V742.2M908.5 663.3V768.0M909.5 661.4V768.0M910.5 661.4V755.7M911.5 663.6V748.8M912.5 669.8V768.0M913.5 669.1V768.0M914.5 667.1V768.0M915.5 653.9V768.0M916.5 653.9V754.4M917.5 666.3V754.4M918.5 666.3V756.8M919.5 669.6V756.8M920.5 668.6V729.9M921.5 665.4V768.0M922.5 665.4V768.0M923.5 672.3V751.0M924.5 668.7V762.0M925.5 668.7V762.0M926.5 669.2V742.3M927.5 666.6V748.5M928.5 666.6V768.0M929.5 668.6V768.0M930.5 669.9V760.4M931.5 669.9V760.4M932.5 668.1V749.3M933.5 664.2V737.5M934.5 664.2V737.5M935.5 669.8V737.4M936.5 669.8V745.3M937.5 674.7V757.7M938.5 663.3V765.3M939.5 663.3V765.3M940.5 664.6V751.3M941.5 664.6V753.6M942.5 665.5V753.6M943.5 668.9V752.2M944.5 671.3V738.1M945.5 670.1V741.5M946.5 670.1V741.5M947.5 669.6V744.9M948.5 669.1V750.4M949.5 669.1V750.4M950.5 670.7V759.6M951.5 672.0V759.6M952.5 671.0V749.2M953.5 671.0V749.2M954.5 669.0V750.7M955.5 669.0V750.7M956.5 668.2V743.5M957.5 668.2V751.8M958.5 672.8V751.8M959.5 668.0V764.2M960.5 663.4V764.2M961.5 663.4V753.8M962.5 669.6V753.0M963.5 663.5V768.0M964.5 663.5V768.0M965.5 665.2V764.2M966.5 665.2V764.2M967.5 667.0V757.2M968.5 668.7V768.0M969.5 664.9V768.0M970.5 664.9V768.0M971.5 669.4V768.0M972.5 669.4V743.8M973.5 670.7V746.1M974.5 669.8V763.0M975.5 665.1V763.0M976.5 665.1V768.0M977.5 657.2V768.0M978.5 657.2V749.6M979.5 667.2V763.8M980.5 664.8V763.8M981.5 664.8V757.6M982.5 666.0V768.0M983.5 666.0V768.0M984.5 667.4V735.6M985.5 667.4V768.0M986.5 667.4V768.0M987.5 665.8V768.0M988.5 665.8V754.3M989.5 666.9V741.7M990.5 666.9V757.4M991.5 670.5V757.4M992.5 664.2V749.6M993.5 664.2V765.8M994.5 663.3V765.8M995.5 663.3V759.2M996.5 672.3V754.7M997.5 672.1V743.8M998.5 670.8V768.0M999.5 669.5V768.0M1000.5 664.0V747.6M1001.5 664.0V756.9M1002.5 670.5V756.9M1003.5 670.5V768.0M1004.5 668.8V768.0M1005.5 668.8V760.2M1006.5 670.7V766.2M1007.5 668.8V768.0M1008.5 668.8V768.0M1009.5 667.5V768.0M1010.5 667.5V768.0M1011.5 668.1V768.0M1012.5 665.1V768.0M1013.5 665.1V748.3M1014.5 671.2V768.0M1015.5 667.0V768.0M1016.5 667.0V768.0M1017.5 668.4V768.0M1018.5 664.8V768.0M1019.5 664.8V767.9M1020.5 668.6V758.3M1021.5 669.5V748.3M1022.5 668.8V750.1M1023.5 668.8V750.1M1024.5 662.4V745.5M1025.5 662.4V745.5M1026.5 667.5V768.0M1027.5 668.3V768.0M1028.5 667.4V768.0M1029.5 667.4V768.0M1030.5 668.7V768.0M1031.5 667.5V760.5M1032.5 667.5V768.0M1033.5 667.2V768.0M1034.5 667.2V766.5M1035.5 669.9V755.1M1036.5 669.9V751.5M1037.5 670.3V768.0M1038.5 670.3V768.0M1039.5 666.7V762.1M1040.5 666.7V756.4M1041.5 669.3V753.9M1042.5 669.0V755.5M1043.5 669.0V768.0M1044.5 667.6V768.0M1045.5 665.2V768.0M1046.5 665.2V761.8M1047.5 668.3V768.0M1048.5 666.1V768.0M1049.5 666.1V765.4M1050.5 667.0V768.0M1051.5 663.9V768.0M1052.5 663.9V766.5M1053.5 665.1V768.0M1054.5 665.0V768.0M1055.5 665.0V768.0M1056.5 669.7V768.0M1057.5 670.0V758.5M1058.5 670.0V752.0M1059.5 665.3V768.0M1060.5 665.3V768.0M1061.5 669.0V768.0M1062.5 669.2V768.0M1063.5 670.1V768.0M1064.5 669.4V768.0M1065.5 668.8V768.0M1066.5 667.9V768.0M1067.5 667.9V768.0M1068.5 667.8V768.0M1069.5 667.8V768.0M1070.5 664.7V763.0M1071.5 663.8V768.0M1072.5 663.8V768.0M1073.5 665.7V767.1M1074.5 661.5V768.0M1075.5 661.5V768.0M1076.5 668.4V765.3M1077.5 666.7V765.2M1078.5 666.7V768.0M1079.5 668.4V768.0M1080.5 668.4V768.0M1081.5 663.6V764.8M1082.5 663.6V768.0M1083.5 669.3V768.0M1084.5 668.1V768.0M1085.5 667.3V768.0M1086.5 667.3V768.0M1087.5 668.9V768.0M1088.5 666.7V768.0M1089.5 666.7V768.0M1090.5 669.3V768.0M1091.5 669.3V768.0M1092.5 668.1V768.0M1093.5 668.1V768.0M1094.5 668.3V768.0M1095.5 668.3V768.0M1096.5 670.3V768.0M1097.5 670.2V768.0M1098.5 668.1V768.0M1099.5 668.1V768.0M1100.5 669.5V768.0M1101.5 669.8V768.0M1102.5 669.7V768.0M1103.5 669.7V768.0M1104.5 671.2V768.0M1105.5 671.2V765.1M1106.5 669.4V768.0M1107.5 667.3V768.0M1108.5 667.3V768.0M1109.5 666.3V768.0M1110.5 666.3V768.0M1111.5 668.9V757.7M1112.5 660.2V768.0M1113.5 660.2V768.0M1114.5 665.4V768.0M1115.5 665.6V768.0M1116.5 665.6V768.0M1117.5 665.2V768.0M1118.5 665.2V768.0M1119.5 665.5V762.8M1120.5 667.5V762.8M1121.5 667.6V768.0M1122.5 667.6V768.0M1123.5 667.5V768.0M1124.5 667.5V768.0M1125.5 668.7V768.0M1126.5 671.9V768.0M1127.5 669.6V761.5M1128.5 665.2V768.0M1129.5 665.2V768.0M1130.5 667.7V768.0M1131.5 668.1V768.0M1132.5 666.8V768.0M1133.5 666.8V768.0M1134.5 666.6V768.0M1135.5 666.6V768.0M1136.5 666.9V768.0M1137.5 668.5V768.0M1138.5 665.1V768.0M1139.5 665.1V768.0M1140.5 668.9V768.0M1141.5 667.6V765.5M1142.5 666.6V768.0M1143.5 665.3V768.0M1144.5 661.9V768.0M1145.5 661.9V768.0M1146.5 669.0V768.0M1147.5 667.4V768.0M1148.5 667.4V768.0M1149.5 669.3V768.0M1150.5 669.3V768.0M1151.5 662.4V768.0M1152.5 662.4V768.0M1153.5 669.6V768.0M1154.5 669.6V768.0M1155.5 671.0V768.0M1156.5 668.7V768.0M1157.5 668.7V768.0M1158.5 668.7V768.0M1159.5 667.3V768.0M1160.5 667.0V768.0M1161.5 667.0V768.0M1162.5 669.4V768.0M1163.5 666.2V768.0M1164.5 666.2V768.0M1165.5 665.4V768.0M1166.5 665.4V768.0M1167.5 667.9V768.0M1168.5 667.6V768.0M1169.5 666.9V768.0M1170.5 666.9V768.0M1171.5 667.6V768.0M1172.5 662.4V768.0M1173.5 662.4V768.0M1174.5 668.9V768.0M1175.5 666.2V768.0M1176.5 666.2V768.0M1177.5 667.2V768.0M1178.5 667.2V768.0M1179.5 667.2V768.0M1180.5 670.1V768.0M1181.5 666.6V768.0M1182.5 666.6V768.0M1183.5 668.3V768.0M1184.5 666.4V768.0M1185.5 663.5V768.0M1186.5 662.7V768.0M1187.5 662.7V768.0M1188.5 668.7V768.0M1189.5 669.3V768.0M1190.5 664.2V768.0M1191.5 664.2V768.0M1192.5 669.4V768.0M1193.5 669.4V768.0M1194.5 666.6V768.0M1195.5 666.6V768.0M1196.5 666.7V768.0M1197.5 666.7V768.0M1198.5 665.6V768.0M1199.5 665.6V768.0M1200.5 668.0V768.0M1201.5 661.9V768.0M1202.5 661.9V768.0M1203.5 665.2V768.0M1204.5 664.4V768.0M1205.5 664.4V768.0M1206.5 667.6V768.0M1207.5 663.6V768.0M1208.5 663.6V768.0M1209.5 665.9V768.0M1210.5 668.0V768.0M1211.5 668.1V768.0M1212.5 670.6V768.0M1213.5 666.2V768.0M1214.5 664.9V768.0M1215.5 664.9V768.0M1216.5 663.3V768.0M1217.5 663.3V768.0M1218.5 666.0V768.0M1219.5 659.1V768.0M1220.5 659.1V768.0M1221.5 667.9V768.0M1222.5 667.9V768.0M1223.5 670.8V768.0M1224.5 665.7V768.0M1225.5 665.7V768.0M1226.5 667.7V768.0M1227.5 666.5V768.0M1228.5 666.5V768.0M1229.5 669.2V768.0M1230.5 665.6V768.0M1231.5 665.6V768.0M1232.5 666.2V768.0M1233.5 666.2V768.0M1234.5 666.2V768.0M1235.5 666.4V768.0M1236.5 666.4V768.0M1237.5 669.2V768.0M1238.5 668.3V768.0M1239.5 668.3V768.0M1240.5 667.3V768.0M1241.5 667.3V768.0M1242.5 667.9V768.0M1243.5 667.9V768.0M1244.5 669.3V768.0M1245.5 667.9V768.0M1246.5 667.9V768.0M1247.5 668.0V768.0M1248.5 665.6V768.0M1249.5 665.6V768.0M1250.5 668.6V768.0M1251.5 668.6V768.0M1252.5 662.9V768.0M1253.5 662.9V768.0M1254.5 667.5V768.0M1255.5 666.2V768.0M1256.5 666.2V768.0M1257.5 663.1V768.0M1258.5 663.1V768.0M1259.5 665.8V768.0M1260.5 665.8V768.0M1261.5 665.2V768.0M1262.5 665.2V768.0M1263.5 671.0V768.0M1264.5 662.3V768.0M1265.5 662.3V768.0M1266.5 665.4V768.0M1267.5 667.4V768.0M1268.5 668.5V768.0M1269.5 668.9V768.0M1270.5 670.1V768.0M1271.5 672.3V768.0M1272.5 676.9V768.0M1273.5 676.3V768.0" stroke="#ffff00" fill="none"/><rect x="559" y="375" width="3" height="20" fill="#ffff00"/><rect x="558" y="395" width="5" height="284" fill="#ffff00"/><rect x="560" y="396" width="1" height="250" fill="#000"/><rect x="573" y="375" width="3" height="20" fill="#ffff00"/><rect x="572" y="395" width="4" height="284" fill="#ffff00"/><rect x="587" y="375" width="3" height="20" fill="#ffff00"/><rect x="586" y="395" width="4" height="284" fill="#ffff00"/><rect x="601" y="375" width="3" height="20" fill="#ffff00"/><rect x="600" y="395" width="4" height="284" fill="#ffff00"/><rect x="615" y="375" width="3" height="20" fill="#ffff00"/><rect x="614" y="395" width="4" height="284" fill="#ffff00"/><rect x="629" y="375" width="3" height="20" fill="#ffff00"/><rect x="628" y="395" width="4" height="284" fill="#ffff00"/><rect x="643" y="375" width="3" height="20" fill="#ffff00"/><rect x="642" y="395" width="4" height="284" fill="#ffff00"/><rect x="657" y="375" width="3" height="20" fill="#ffff00"/><rect x="656" y="395" width="4" height="284" fill="#ffff00"/><rect x="671" y="375" width="3" height="20" fill="#ffff00"/><rect x="670" y="395" width="4" height="284" fill="#ffff00"/><rect x="685" y="375" width="3" height="20" fill="#ffff00"/><rect x="684" y="395" width="4" height="284" fill="#ffff00"/><rect x="699" y="375" width="3" height="20" fill="#ffff00"/><rect x="698" y="395" width="4" height="284" fill="#ffff00"/><rect x="713" y="375" width="3" height="20" fill="#ffff00"/><rect x="712" y="395" width="4" height="284" fill="#ffff00"/><rect x="726" y="375" width="3" height="20" fill="#ffff00"/><rect x="725" y="395" width="4" height="284" fill="#ffff00"/><rect x="740" y="375" width="3" height="20" fill="#ffff00"/><rect x="739" y="395" width="4" height="284" fill="#ffff00"/><rect x="754" y="375" width="3" height="304" fill="#ffff00"/><rect x="768" y="375" width="3" height="304" fill="#ffff00"/><rect x="782" y="375" width="2" height="304" fill="#ffff00"/><rect x="796" y="375" width="2" height="304" fill="#ffff00"/><rect x="810" y="375" width="2" height="304" fill="#ffff00"/><rect x="824" y="375" width="2" height="304" fill="#ffff00"/><rect x="838" y="375" width="2" height="304" fill="#ffff00"/><rect x="852" y="375" width="2" height="304" fill="#ffff00"/><rect x="866" y="375" width="2" height="304" fill="#ffff00"/><rect x="880" y="375" width="2" height="304" fill="#ffff00"/><rect x="894" y="375" width="2" height="304" fill="#ffff00"/><rect x="908" y="375" width="2" height="304" fill="#ffff00"/><rect x="922" y="375" width="2" height="304" fill="#ffff00"/><rect x="936" y="375" width="2" height="304" fill="#ffff00"/><rect x="949" y="375" width="2" height="304" fill="#ffff00"/><rect x="963" y="375" width="2" height="304" fill="#ffff00"/><rect x="977" y="375" width="2" height="304" fill="#ffff00"/><rect x="991" y="375" width="2" height="304" fill="#ffff00"/><rect x="1005" y="375" width="2" height="304" fill="#ffff00"/><rect x="1019" y="375" width="2" height="304" fill="#ffff00"/><rect x="1033" y="375" width="2" height="304" fill="#ffff00"/><rect x="1047" y="375" width="2" height="304" fill="#ffff00"/><rect x="1061" y="375" width="2" height="304" fill="#ffff00"/><rect x="1075" y="375" width="2" height="304" fill="#ffff00"/><rect x="1089" y="375" width="2" height="304" fill="#ffff00"/><rect x="1103" y="375" width="2" height="304" fill="#ffff00"/><rect x="1117" y="375" width="2" height="304" fill="#ffff00"/><rect x="1131" y="375" width="2" height="304" fill="#ffff00"/><rect x="1145" y="375" width="2" height="304" fill="#ffff00"/><rect x="1159" y="375" width="2" height="304" fill="#ffff00"/><rect x="1172" y="375" width="2" height="304" fill="#ffff00"/><rect x="1186" y="375" width="2" height="304" fill="#ffff00"/><rect x="1200" y="375" width="2" height="304" fill="#ffff00"/><rect x="1214" y="375" width="2" height="304" fill="#ffff00"/><rect x="1228" y="375" width="2" height="304" fill="#ffff00"/><rect x="1242" y="375" width="2" height="304" fill="#ffff00"/></svg></body></html>
